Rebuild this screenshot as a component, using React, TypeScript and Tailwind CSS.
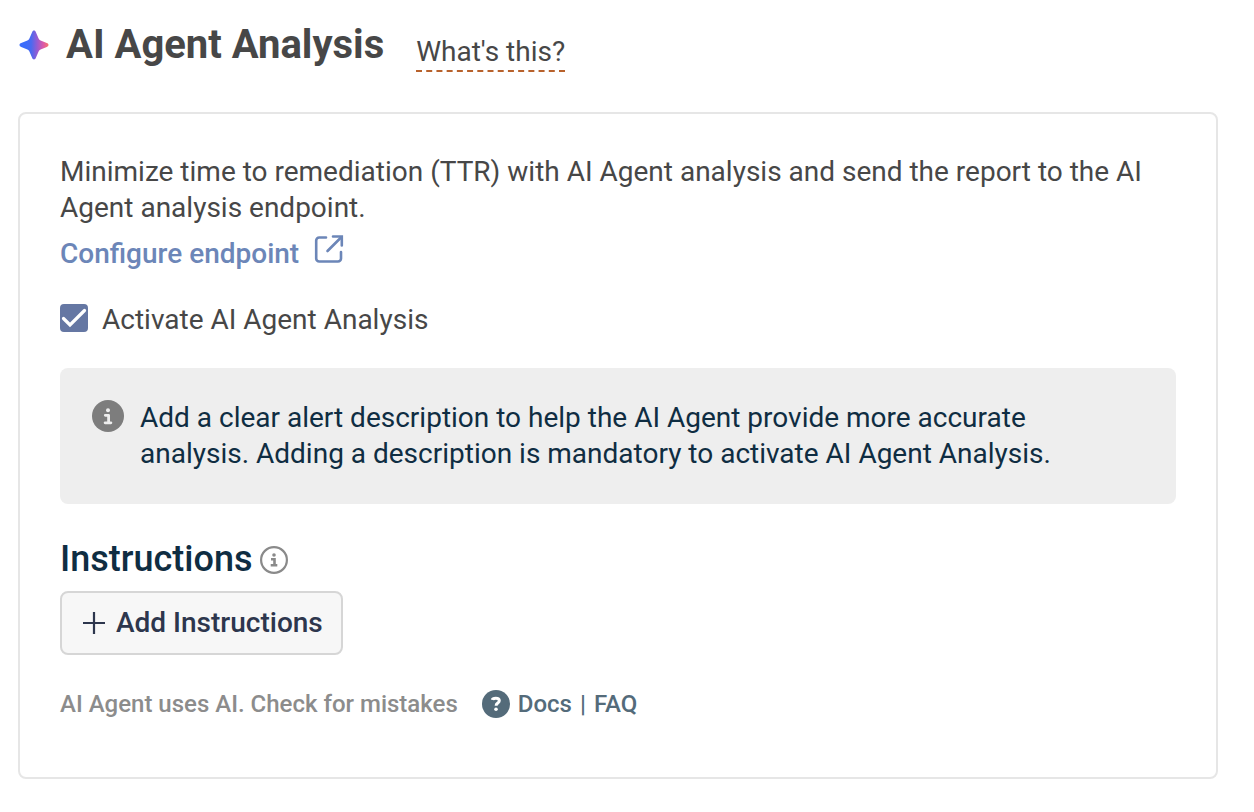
import { useState } from "react";

function SparkIcon() {
  return (
    <svg width="30" height="30" viewBox="0 0 30 30" className="mt-[10px] ml-px" aria-hidden="true">
      <defs>
        <linearGradient id="spark" x1="0" y1="0" x2="1" y2="0">
          <stop offset="0.2" stopColor="#3b6cfb" />
          <stop offset="0.4" stopColor="#4a6af0" />
          <stop offset="0.62" stopColor="#9a5bd0" />
          <stop offset="0.82" stopColor="#dc58a8" />
          <stop offset="1" stopColor="#f5766a" />
        </linearGradient>
      </defs>
      <path
        fill="url(#spark)"
        d="M15 .5c.9 0 1.500.7 1.900 1.700l2.700 6.200c.4.9 1.100 1.600 2 2l6.200 2.700c1 .4 1.700 1 1.700 1.900s-.7 1.500-1.700 1.900l-6.200 2.700c-.9.4-1.600 1.100-2 2l-2.700 6.200c-.4 1-1 1.700-1.900 1.700s-1.500-.7-1.900-1.700l-2.700-6.200c-.4-.9-1.100-1.600-2-2l-6.200-2.700C1.200 16.500.5 15.900.5 15s.7-1.500 1.700-1.900l6.200-2.700c.9-.4 1.600-1.100 2-2l2.700-6.200C13.500 1.200 14.100.5 15 .5z"
      />
    </svg>
  );
}

function ExternalIcon() {
  return (
    <svg
      width="30"
      height="30"
      viewBox="0 0 30 30"
      fill="none"
      stroke="currentColor"
      strokeWidth="2.6"
      strokeLinecap="round"
      aria-hidden="true"
    >
      <path d="M12 3.500H5.200A3 3 0 0 0 2.200 6.500V24.500a3 3 0 0 0 3 3h18.800a3 3 0 0 0 3-3v-6.500" strokeLinejoin="round" />
      <path d="M13.500 17 27 3.500" />
      <path d="M19 2.500h8.800V11.500" strokeLinejoin="miter" />
    </svg>
  );
}

function InfoIcon() {
  return (
    <svg width="32" height="32" viewBox="0 0 32 32" className="shrink-0" aria-hidden="true">
      <circle cx="16" cy="16" r="16" fill="#7d7d7d" />
      <circle cx="16" cy="10.200" r="2" fill="#eeeeee" />
      <path
        d="M13.300 15.300h3.300v7.200M13.100 22.800h5.800"
        fill="none"
        stroke="#eeeeee"
        strokeWidth="2.800"
        strokeLinecap="round"
        strokeLinejoin="round"
      />
    </svg>
  );
}

function InfoOutlineIcon() {
  return (
    <svg width="28" height="28" viewBox="0 0 28 28" aria-hidden="true">
      <circle cx="14" cy="14" r="12.900" fill="none" stroke="#8a8a8a" strokeWidth="2.200" />
      <circle cx="14" cy="9" r="1.800" fill="#8a8a8a" />
      <path d="M11 13.200h3.500v5.800M10.700 19.200h6.600" fill="none" stroke="#8a8a8a" strokeWidth="2.600" />
    </svg>
  );
}

function HelpIcon() {
  return (
    <svg width="28" height="28" viewBox="0 0 28 28" className="mr-2 ml-6" aria-hidden="true">
      <circle cx="14" cy="14" r="14" fill="#546b7a" />
      <path
        d="M10.300 9.900c.2-1 1.600-1.600 3.500-1.600 2.200 0 3.500.9 3.500 2.500 0 2.300-3.200 2.200-3.200 4.900"
        fill="none"
        stroke="white"
        strokeWidth="3"
      />
      <circle cx="14" cy="19.200" r="1.800" fill="white" />
    </svg>
  );
}

function PlusIcon() {
  return (
    <svg width="24" height="24" viewBox="0 0 24 24" stroke="currentColor" strokeWidth="2.2" aria-hidden="true">
      <path d="M1 12h22M12 1v22" />
    </svg>
  );
}

function ActivateCheckbox() {
  const [active, setActive] = useState(true);

  return (
    <label className="mt-8 flex items-start gap-[14px]">
      <span className="grid size-7">
        <input
          type="checkbox"
          checked={active}
          onChange={(e) => setActive(e.target.checked)}
          className="col-start-1 row-start-1 size-7 appearance-none rounded border-2 border-[#6577a3] checked:bg-[#6577a3]"
        />
        {active && (
          <svg
            viewBox="0 0 28 28"
            className="pointer-events-none col-start-1 row-start-1 size-7"
            fill="none"
            stroke="white"
            strokeWidth="3.200"
            strokeLinecap="round"
            aria-hidden="true"
          >
            <path d="M3.500 14.500 10 21 24.500 6.500" />
          </svg>
        )}
      </span>
      <span className="leading-8">Activate AI Agent Analysis</span>
    </label>
  );
}

export default function App() {
  return (
    <main className="bg-white pt-5 pr-9 pb-8 pl-[18px] font-['Roboto',sans-serif] text-[28px] leading-9 text-[#474747]">
      <header className="flex items-start">
        <SparkIcon />
        <h1 className="ml-[17px] text-[40px] leading-[50px] font-bold">AI Agent Analysis</h1>
        <a href="#about" className="mt-[14px] ml-8 border-b-2 border-dashed border-[#b8622c]">
          What's this?
        </a>
      </header>

      <section className="mt-10 rounded-lg border-2 border-[#e6e6e6] px-10 pt-10 pb-[57px]">
        <p>
          Minimize time to remediation (TTR) with AI Agent analysis and send the report to the AI Agent analysis
          endpoint.
        </p>
        <a href="#endpoint" className="mt-2 inline-flex items-start gap-[15px] font-medium text-[#6c86b8]">
          <span className="mt-[2px]">Configure endpoint</span>
          <ExternalIcon />
        </a>

        <ActivateCheckbox />

        <div className="mt-8 flex items-start gap-4 rounded-lg bg-[#eeeeee] py-8 pr-16 pl-8 text-[#0f2d42]">
          <InfoIcon />
          <p>
            Add a clear alert description to help the AI Agent provide more accurate analysis. Adding a description is
            mandatory to activate AI Agent Analysis.
          </p>
        </div>

        <h2 className="mt-8 flex items-center gap-2 text-4xl leading-[47px] font-medium text-[#0f2d42]">
          Instructions
          <InfoOutlineIcon />
        </h2>
        <button
          type="button"
          className="mt-2 flex h-16 items-center gap-[10px] rounded-lg border-2 border-[#d6d6d6] bg-[#f7f7f7] pr-[18px] pl-5 font-medium text-[#2d364d]"
        >
          <PlusIcon />
          Add Instructions
        </button>

        <footer className="mt-[33px] flex items-center text-2xl font-medium text-[#8c8c8c]">
          <span>AI Agent uses AI. Check for mistakes</span>
          <HelpIcon />
          <nav className="flex gap-2 text-[#546b7a]">
            <a href="#docs">Docs</a>
            <span>|</span>
            <a href="#faq">FAQ</a>
          </nav>
        </footer>
      </section>
    </main>
  );
}
